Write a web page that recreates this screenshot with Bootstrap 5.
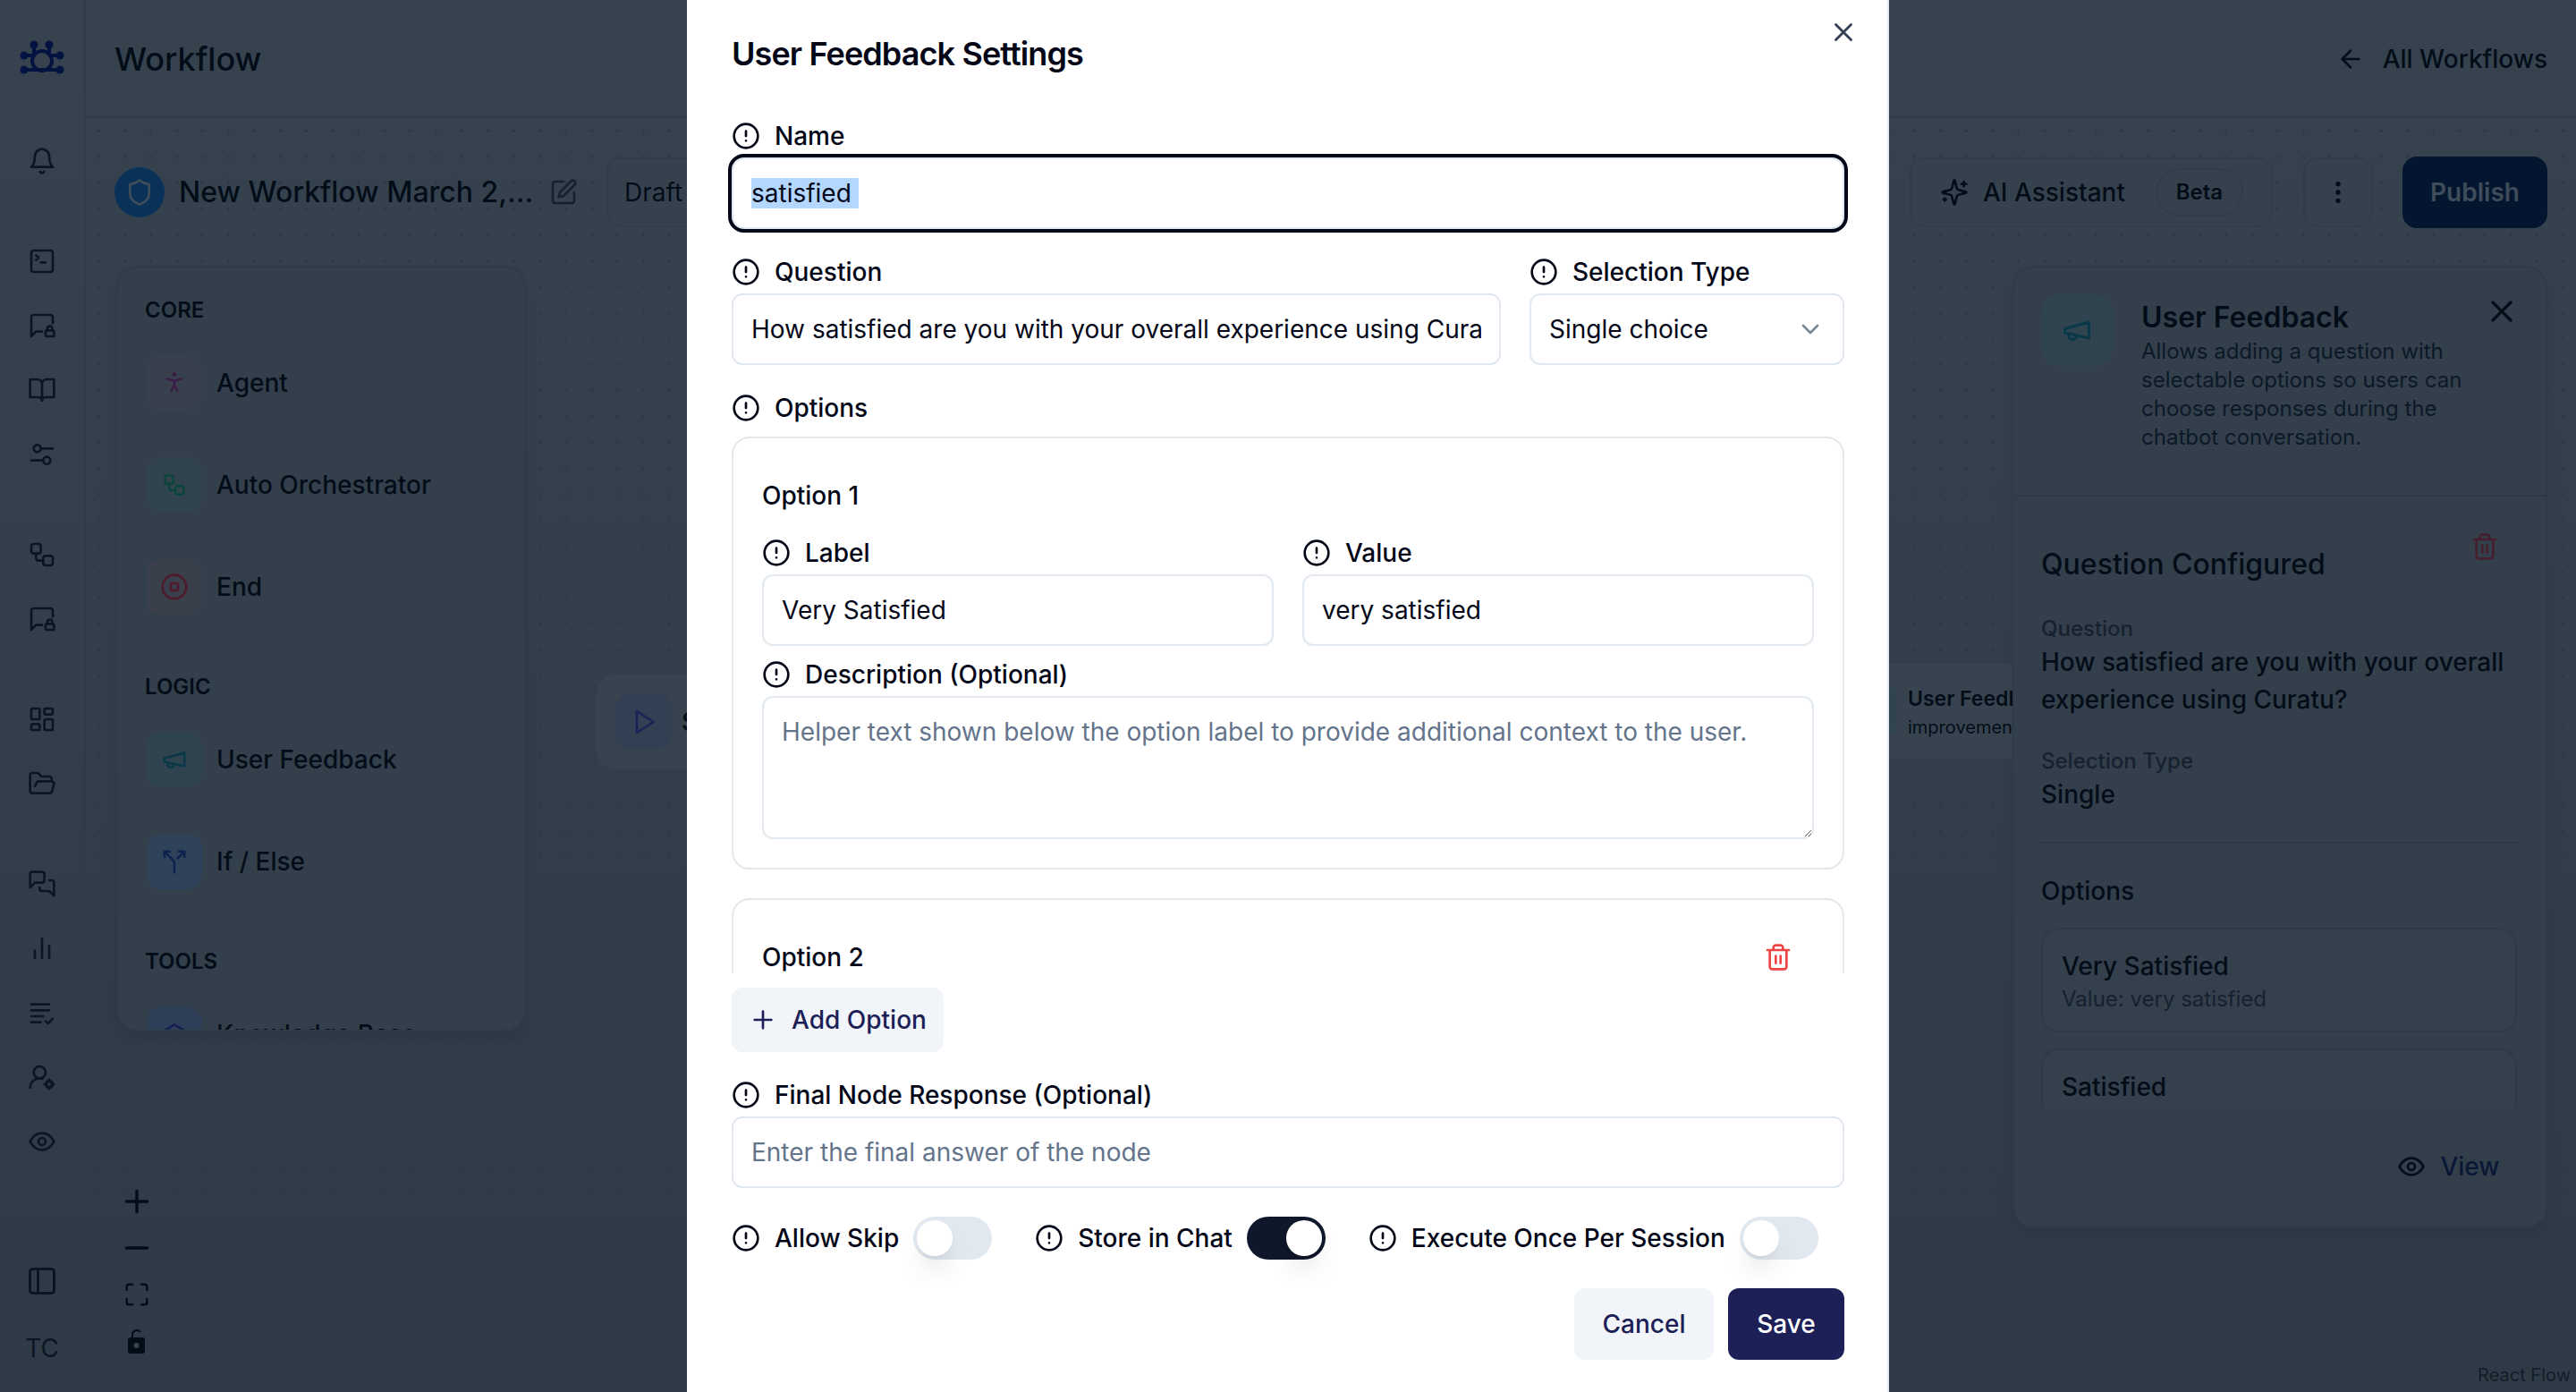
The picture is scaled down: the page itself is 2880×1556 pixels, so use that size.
<!DOCTYPE html>
<html lang="en">
<head>
<meta charset="utf-8">
<title>User Feedback Settings</title>
<link rel="stylesheet" href="https://cdn.jsdelivr.net/npm/bootstrap@5.3.0/dist/css/bootstrap.min.css">
<style>
:root{--ink:#030d18;--dim:#15222e;--line:#2f3c49;--brand:#1c2056;--fg:#020617;}
html,body{height:100%;margin:0;overflow:hidden}
body{font-family:Inter,"Liberation Sans",sans-serif;background:#323f4b;color:var(--ink)}
svg.ic{fill:none;stroke:currentColor;stroke-width:2;stroke-linecap:round;stroke-linejoin:round;flex:none;display:block}
.app{height:1556px;background:linear-gradient(#36434f,#2e3b47)}
.rail{width:96px;flex:none;border-right:2px solid #2f3c48;position:relative;color:#0a1622}
.rail-logo{height:144px;padding:30px 0 0 10px}
.rail-ic{height:72px;width:100%}
.rail-sp{height:40px}
.rail-sp-lg{height:84px}
.rail-tc{font-size:28px;line-height:44px;margin-top:17px;text-align:center;color:#0a1622;font-weight:400}
.stage{min-width:0;position:relative}
.top-bar{height:132px;border-bottom:2px solid #2f3c48;padding:2px 32px 0}
.top-name{font-size:36px;font-weight:500;line-height:56px}
.back-link{font-size:28px;font-weight:500;gap:20px}
.tool-bar{height:78px;margin-top:44px;padding:0 32px;position:relative}
.shield-dot{width:56px;height:56px;border-radius:50%;background:#0a3158;color:#3d4e5a}
.flow-name{font-size:32px;font-weight:500;margin-left:16px}
.edit-ic{color:var(--dim);margin-left:18px}
.soft-box{border:2px solid #303d4a;border-radius:16px;background:#35424e}
.draft{height:78px;width:200px;margin-left:32px;padding-left:18px;font-size:28px;line-height:74px;font-weight:400}
.ai-box{width:406px;height:78px;padding:0 32px}
.ai-text{font-size:28px;font-weight:500;margin-left:16px;white-space:nowrap}
.beta{width:98px;height:54px;border:2px solid #303d4a;border-radius:27px;text-align:center;line-height:50px;font-size:24px;font-weight:600;margin-left:34px;flex:none}
.dots-btn{width:78px;height:78px;margin-left:34px}
.pub{width:162px;height:80px;margin-left:33px;background:#04162f;border-radius:16px;color:#3f4d5a;font-size:28px;font-weight:600}
.work{position:absolute;left:0;right:0;top:132px;bottom:0;background-image:radial-gradient(#2d3a46 1.5px,transparent 1.6px);background-size:29px 29px}
.work-in{position:absolute;left:34px;right:32px;top:165px}
.pane{border:2px solid #2f3c48;border-radius:24px;background:#333f4b;box-shadow:0 8px 14px rgba(0,0,0,.1);overflow:hidden}
.palette{width:458px;height:856px;padding:32px 32px 32px 30px}
.group-h{font-size:24px;line-height:32px;font-weight:600;height:32px}
.p-item{height:62px;margin-top:52px;font-size:28px;font-weight:500}
.group-h + .p-item{margin-top:34px}
.p-item + .group-h{margin-top:65px}
.p-box{width:62px;height:62px;border-radius:16px;margin:0 16px 0 2px}
.c-agent{background:#383f4d;color:#3a1c46}.c-auto{background:#31444d;color:#0a443c}.c-end{background:#3a404b;color:#4e1a2c}
.c-fb{background:#30444f;color:#093848}.c-if{background:#2f425a;color:#0b234d}.c-kb{background:#2f3e57;color:#141f55}
.detail{width:598px;height:1076px}
.d-head{height:256px;border-bottom:2px solid #2d3a46;padding:30px 32px 30px 30px;position:relative}
.d-box{width:80px;height:80px;border-radius:20px;margin-right:32px;background:#30444f;color:#093848;flex:none}
.d-title{font-size:32px;line-height:48px;font-weight:600;margin:2px 0 -2px}
.d-desc{font-size:24px;line-height:32px;color:#0b1927}
.d-x{position:absolute;top:29px;left:525px}
.d-scroll{height:682px;overflow:hidden;padding:40px 32px 0 30px}
.d-conf{font-size:32px;font-weight:500;line-height:48px;margin-top:12px}
.d-trash{color:#451f2e;margin-right:20px}
.d-lab{font-size:24px;line-height:32px;color:var(--dim);font-weight:500;margin-top:32px}
.d-val{font-size:28px;line-height:42px;font-weight:500}
.d-rule{border-top:2px solid #2d3a46;margin:32px 0}
.d-opt{font-size:28px;line-height:42px;font-weight:500;margin-bottom:20px}
.d-card{border:2px solid #2e3b47;border-radius:20px;padding:21px;height:117px;margin-bottom:18px;background:#34404c}
.d-card b{display:block;font-weight:500;font-size:28px;line-height:40px}
.d-card small{display:block;font-size:24px;line-height:34px;color:var(--dim)}
.d-foot{padding:32px 32px 0}
.view-btn{width:153px;height:69px;border-radius:16px;background:#323f4b;font-size:28px;font-weight:500;color:#091735}
.view-btn svg{color:var(--ink)}
.flow-node{position:absolute;border:2px solid #33404c;background:#37444f;border-radius:24px}
.node-a{left:569px;top:620px;width:300px;height:110px;font-size:28px;font-weight:600;line-height:106px;padding-left:95px}
.node-a i{position:absolute;left:21px;top:21px;width:63px;height:63px;border-radius:16px;background:#333f52;color:#1a2258;display:flex;align-items:center;justify-content:center}
.node-b{left:1980px;top:608px;width:174px;height:110px;padding:23px 0 0 55px;overflow:hidden;white-space:nowrap;font-size:20px;line-height:32px;border-radius:24px 0 0 24px;border-right:0}
.node-b b{display:block;font-weight:600;font-size:23px}
.node-b i{position:absolute;left:10px;top:25px;width:32px;height:56px;border-radius:12px;background:#30444f}
.zoom-set{position:absolute;left:31px;top:1184px;width:52px;border:2px solid #2f3c48}
.zoom-set div{height:52px;border-bottom:2px solid #2f3c48;display:flex;align-items:center;justify-content:center}
.zoom-set div:last-child{border:0}
.flow-mark{position:absolute;right:6px;bottom:2px;font-size:20px;line-height:34px;color:#121d27;padding:0 0 0 12px}
/* modal */
.dlg{position:fixed;left:768px;top:0;width:1344px;height:1556px;background:#fff;border-right:2px solid #e2e8f0;padding:32px 46px 0 48px;color:var(--fg);overflow:hidden;z-index:10}
.dlg-inner{padding:0 2px}
.dlg-title{font-size:36px;line-height:56px;font-weight:600;letter-spacing:-.9px;margin:0 0 48px}
.dlg-x{position:absolute;left:1276px;top:19px;color:#334155;border:0;background:none;padding:0}
.f-lab{display:flex;align-items:center;gap:16px;font-size:28px;line-height:32px;font-weight:500;margin:0 0 8px;color:var(--fg);white-space:nowrap}
.f-lab svg{width:32px;height:32px}
.form-control.fld{height:80px;border:2px solid #e2e8f0;border-radius:12px;font-size:28px;padding:0 20px;color:var(--fg);box-shadow:none;font-weight:400}
.form-control.fld::placeholder{color:#64748b;opacity:1}
.form-control.fld.ring{outline:4px solid #020617;outline-offset:0;border-radius:14px}
.fld::selection{background:#b3d7ff;color:#020617}
textarea.form-control.fld{height:160px;padding:18px 20px;line-height:40px}
.sel-wrap{position:relative}
.sel-wrap svg{position:absolute;right:22px;top:24px;width:32px;height:32px;color:#7a8798}
.q-row{gap:32px;margin-top:32px}
.q-main{width:860px}
.q-side{width:352px}
.half-row{gap:32px}
.half{width:50%}
.gap-f{margin-top:32px}
.gap-s{margin-top:16px}
.scroll-zone{height:600px;overflow:hidden;margin-top:16px}
.opt-card{border:2px solid #e5e7eb;border-radius:20px;padding:32px;margin-bottom:32px}
.opt-h{height:64px;margin-bottom:16px;font-size:28px;font-weight:500;color:var(--fg)}
.opt-trash{color:#ef4444;margin-right:24px}
.add-btn{height:72px;width:237px;margin-top:16px;border-radius:12px;background:#f1f5f9;color:var(--brand);font-size:28px;font-weight:500;border:0;padding:0;gap:16px}
.sw{width:88px;height:48px;border-radius:24px;background:#e2e8f0;position:relative;flex:none;margin-left:16px}
.sw::after{content:"";position:absolute;left:4px;top:4px;width:40px;height:40px;border-radius:50%;background:#fff;box-shadow:0 20px 30px -6px rgba(0,0,0,.12),0 8px 12px -8px rgba(0,0,0,.1)}
.sw.on{background:#0f172a}
.sw.on::after{left:44px}
.sw-row{height:48px;margin-top:32px}
.sw-item{margin-right:48px;flex:none}
.sw-item .f-lab{margin:0}
.foot-row{margin-top:32px}
.dlg-btn{height:80px;border-radius:12px;font-size:28px;font-weight:500;border:0;padding:0}
.b-cancel{width:156px;background:#f1f5f9;color:var(--brand)}
.b-save{width:130px;background:var(--brand);color:#fff;margin-left:16px}
</style>
</head>
<body>
<svg width="0" height="0" class="position-absolute">
<defs>
<symbol id="i-info" viewBox="0 0 24 24"><circle cx="12" cy="12" r="10"/><path d="M12 8v4M12 16h.01"/></symbol>
<symbol id="i-x" viewBox="0 0 24 24"><path d="M18 6 6 18M6 6l12 12"/></symbol>
<symbol id="i-chev" viewBox="0 0 24 24"><path d="m6 9 6 6 6-6"/></symbol>
<symbol id="i-trash" viewBox="0 0 24 24"><path d="M3 6h18M19 6v14c0 1-1 2-2 2H7c-1 0-2-1-2-2V6M8 6V4c0-1 1-2 2-2h4c1 0 2 1 2 2v2M10 11v6M14 11v6"/></symbol>
<symbol id="i-plus" viewBox="0 0 24 24"><path d="M5 12h14M12 5v14"/></symbol>
<symbol id="i-minus" viewBox="0 0 24 24"><path d="M5 12h14"/></symbol>
<symbol id="i-bell" viewBox="0 0 24 24"><path d="M6 8a6 6 0 0 1 12 0c0 7 3 9 3 9H3s3-2 3-9M10.3 21a1.94 1.94 0 0 0 3.4 0"/></symbol>
<symbol id="i-term" viewBox="0 0 24 24"><rect x="3" y="3" width="18" height="18" rx="2"/><path d="m7 11 2-2-2-2M11 13h4"/></symbol>
<symbol id="i-msglock" viewBox="0 0 24 24"><path d="M21 10V5a2 2 0 0 0-2-2H5a2 2 0 0 0-2 2v16l4-4h5"/><rect x="15" y="16" width="7" height="5" rx="1"/><path d="M16.5 16v-1.5a2 2 0 0 1 4 0V16"/></symbol>
<symbol id="i-book" viewBox="0 0 24 24"><path d="M2 3h6a4 4 0 0 1 4 4v14a3 3 0 0 0-3-3H2zM22 3h-6a4 4 0 0 0-4 4v14a3 3 0 0 1 3-3h7z"/></symbol>
<symbol id="i-slide" viewBox="0 0 24 24"><circle cx="8" cy="7" r="3"/><path d="M11 7h10M3 17h10"/><circle cx="16" cy="17" r="3"/></symbol>
<symbol id="i-flow" viewBox="0 0 24 24"><rect x="3" y="3" width="8" height="8" rx="2"/><path d="M7 11v4a2 2 0 0 0 2 2h4"/><rect x="13" y="13" width="8" height="8" rx="2"/></symbol>
<symbol id="i-dash" viewBox="0 0 24 24"><rect x="3" y="3" width="7" height="9" rx="1"/><rect x="14" y="3" width="7" height="5" rx="1"/><rect x="14" y="12" width="7" height="9" rx="1"/><rect x="3" y="16" width="7" height="5" rx="1"/></symbol>
<symbol id="i-folder" viewBox="0 0 24 24"><path d="m6 14 1.5-2.9A2 2 0 0 1 9.24 10H20a2 2 0 0 1 1.94 2.5l-1.54 6a2 2 0 0 1-1.95 1.5H4a2 2 0 0 1-2-2V5a2 2 0 0 1 2-2h3.9a2 2 0 0 1 1.69.9l.81 1.2a2 2 0 0 0 1.67.9H18a2 2 0 0 1 2 2v2"/></symbol>
<symbol id="i-chat" viewBox="0 0 24 24"><path d="M14 9a2 2 0 0 1-2 2H6l-4 4V4c0-1.1.9-2 2-2h8a2 2 0 0 1 2 2zM18 9h2a2 2 0 0 1 2 2v11l-4-4h-6a2 2 0 0 1-2-2v-1"/></symbol>
<symbol id="i-bars" viewBox="0 0 24 24"><path d="M18 20V10M12 20V4M6 20v-6"/></symbol>
<symbol id="i-list" viewBox="0 0 24 24"><path d="M3 5h15M3 10h15M3 15h10M3 20h8M15 19l2 2 4-4"/></symbol>
<symbol id="i-usercog" viewBox="0 0 24 24"><circle cx="10" cy="8" r="5"/><path d="M2 21a8 8 0 0 1 10.4-7.6"/><circle cx="18" cy="18" r="2.6" stroke-width="2.6"/><path d="M18 14v1M18 21v1M14 18h1M21 18h1"/></symbol>
<symbol id="i-eye" viewBox="0 0 24 24"><path d="M2 12s3-7 10-7 10 7 10 7-3 7-10 7-10-7-10-7Z"/><circle cx="12" cy="12" r="3"/></symbol>
<symbol id="i-panel" viewBox="0 0 24 24"><rect x="3" y="3" width="18" height="18" rx="2"/><path d="M9 3v18"/></symbol>
<symbol id="i-edit" viewBox="0 0 24 24"><path d="M12 3H5a2 2 0 0 0-2 2v14a2 2 0 0 0 2 2h14a2 2 0 0 0 2-2v-7"/><path d="M18.375 2.625a2.121 2.121 0 1 1 3 3L12 15l-4 1 1-4Z"/></symbol>
<symbol id="i-shield" viewBox="0 0 24 24"><path d="M20 13c0 5-3.5 7.500-7.660 8.950a1 1 0 0 1-.67-.01C7.500 20.500 4 18 4 13V6a1 1 0 0 1 1-1c2 0 4.500-1.200 6.240-2.720a1.170 1.170 0 0 1 1.520 0C14.510 3.810 17 5 19 5a1 1 0 0 1 1 1z"/></symbol>
<symbol id="i-person" viewBox="0 0 24 24"><circle cx="12" cy="4" r="1"/><path d="m9 20 3-6 3 6M5 8l7 2 7-2M12 10v4"/></symbol>
<symbol id="i-stop" viewBox="0 0 24 24"><circle cx="12" cy="12" r="10"/><rect x="9" y="9" width="6" height="6" rx="1"/></symbol>
<symbol id="i-mega" viewBox="0 0 24 24"><path d="m3 11 18-5v12L3 14v-3zM11.600 16.800a3 3 0 1 1-5.800-1.600"/></symbol>
<symbol id="i-split" viewBox="0 0 24 24"><path d="M16 3h5v5M8 3H3v5M12 22v-8.300a4 4 0 0 0-1.172-2.872L3 3M15 9l6-6"/></symbol>
<symbol id="i-kb" viewBox="0 0 24 24"><path d="m2 10 10-6 10 6-10 6zM6 13v5c3 2 9 2 12 0v-5"/></symbol>
<symbol id="i-fit" viewBox="0 0 24 24"><path d="M8 3H5a2 2 0 0 0-2 2v3M21 8V5a2 2 0 0 0-2-2h-3M3 16v3a2 2 0 0 0 2 2h3M16 21h3a2 2 0 0 0 2-2v-3"/></symbol>
<symbol id="i-spark" viewBox="0 0 24 24"><path d="M9.937 15.500A2 2 0 0 0 8.500 14.063l-6.135-1.582a.5.5 0 0 1 0-.962L8.500 9.936A2 2 0 0 0 9.937 8.500l1.582-6.135a.5.5 0 0 1 .963 0L14.063 8.500A2 2 0 0 0 15.500 9.937l6.135 1.581a.5.5 0 0 1 0 .964L15.500 14.063a2 2 0 0 0-1.437 1.437l-1.582 6.135a.5.5 0 0 1-.963 0zM20 3v4M22 5h-4M4 17v2M5 18H3"/></symbol>
<symbol id="i-back" viewBox="0 0 24 24"><path d="m12 19-7-7 7-7M19 12H5"/></symbol>
<symbol id="i-play" viewBox="0 0 24 24"><path d="m6 3 14 9-14 9z"/></symbol>
<symbol id="i-dots" viewBox="0 0 24 24"><circle cx="12" cy="5" r="1"/><circle cx="12" cy="12" r="1"/><circle cx="12" cy="19" r="1"/></symbol>
</defs>
</svg>

<div class="app d-flex">
  <aside class="rail">
    <div class="rail-logo">
      <svg width="66" height="60" viewBox="10 30 66 60" fill="none" stroke="#031240" stroke-width="4">
        <circle cx="47" cy="68" r="11"/><path d="M38 50v10M55 50v10M27 62h10M57 62h10M27 78h40"/>
        <g fill="#031240" stroke="none"><circle cx="38" cy="50" r="4.500"/><circle cx="55" cy="50" r="4.500"/><circle cx="27" cy="62" r="4.500"/><circle cx="67" cy="62" r="4.500"/><circle cx="27" cy="78" r="4.500"/><circle cx="67" cy="78" r="4.500"/></g>
      </svg>
    </div>
    <div class="rail-ic d-flex align-items-center justify-content-center"><svg class="ic" width="32" height="32"><use href="#i-bell"/></svg></div>
    <div class="rail-sp"></div>
    <div class="rail-ic d-flex align-items-center justify-content-center"><svg class="ic" width="32" height="32"><use href="#i-term"/></svg></div>
    <div class="rail-ic d-flex align-items-center justify-content-center"><svg class="ic" width="32" height="32"><use href="#i-msglock"/></svg></div>
    <div class="rail-ic d-flex align-items-center justify-content-center"><svg class="ic" width="32" height="32"><use href="#i-book"/></svg></div>
    <div class="rail-ic d-flex align-items-center justify-content-center"><svg class="ic" width="32" height="32"><use href="#i-slide"/></svg></div>
    <div class="rail-sp"></div>
    <div class="rail-ic d-flex align-items-center justify-content-center"><svg class="ic" width="32" height="32"><use href="#i-flow"/></svg></div>
    <div class="rail-ic d-flex align-items-center justify-content-center"><svg class="ic" width="32" height="32"><use href="#i-msglock"/></svg></div>
    <div class="rail-sp"></div>
    <div class="rail-ic d-flex align-items-center justify-content-center"><svg class="ic" width="32" height="32"><use href="#i-dash"/></svg></div>
    <div class="rail-ic d-flex align-items-center justify-content-center"><svg class="ic" width="32" height="32"><use href="#i-folder"/></svg></div>
    <div class="rail-sp"></div>
    <div class="rail-ic d-flex align-items-center justify-content-center"><svg class="ic" width="32" height="32"><use href="#i-chat"/></svg></div>
    <div class="rail-ic d-flex align-items-center justify-content-center"><svg class="ic" width="32" height="32"><use href="#i-bars"/></svg></div>
    <div class="rail-ic d-flex align-items-center justify-content-center"><svg class="ic" width="32" height="32"><use href="#i-list"/></svg></div>
    <div class="rail-ic d-flex align-items-center justify-content-center"><svg class="ic" width="32" height="32"><use href="#i-usercog"/></svg></div>
    <div class="rail-ic d-flex align-items-center justify-content-center"><svg class="ic" width="32" height="32"><use href="#i-eye"/></svg></div>
    <div class="rail-sp-lg"></div>
    <div class="rail-ic d-flex align-items-center justify-content-center"><svg class="ic" width="36" height="36"><use href="#i-panel"/></svg></div>
    <div class="rail-tc">TC</div>
  </aside>
  <main class="stage flex-grow-1">
    <header class="top-bar d-flex align-items-center justify-content-between">
      <div class="top-name">Workflow</div>
      <div class="back-link d-flex align-items-center"><svg class="ic" width="32" height="32"><use href="#i-back"/></svg><span>All Workflows</span></div>
    </header>
    <div class="work">
      <div class="flow-node node-a"><i><svg class="ic" width="32" height="32"><use href="#i-play"/></svg></i>Start</div>
      <div class="flow-node node-b"><i></i><b>User Feedback</b><span>improvements</span></div>
      <div class="zoom-set">
        <div><svg class="ic" width="40" height="40"><use href="#i-plus"/></svg></div>
        <div><svg class="ic" width="40" height="40"><use href="#i-minus"/></svg></div>
        <div><svg class="ic" width="30" height="30"><use href="#i-fit"/></svg></div>
        <div><svg width="22" height="28" viewBox="0 0 22 28" fill="#030d18"><rect x="1" y="9" width="19" height="18" rx="3"/><path d="M6 9V6a5 5 0 0 1 9-3" fill="none" stroke="#030d18" stroke-width="2"/><circle cx="10.500" cy="18" r="3" fill="#36434f"/></svg></div>
      </div>
      <div class="work-in d-flex justify-content-between align-items-start">
        <section class="pane palette">
          <div class="group-h">CORE</div>
          <div class="p-item d-flex align-items-center"><span class="p-box c-agent d-flex align-items-center justify-content-center"><svg class="ic" width="28" height="28"><use href="#i-person"/></svg></span>Agent</div>
          <div class="p-item d-flex align-items-center"><span class="p-box c-auto d-flex align-items-center justify-content-center"><svg class="ic" width="28" height="28"><use href="#i-flow"/></svg></span>Auto Orchestrator</div>
          <div class="p-item d-flex align-items-center"><span class="p-box c-end d-flex align-items-center justify-content-center"><svg class="ic" width="32" height="32"><use href="#i-stop"/></svg></span>End</div>
          <div class="group-h">LOGIC</div>
          <div class="p-item d-flex align-items-center"><span class="p-box c-fb d-flex align-items-center justify-content-center"><svg class="ic" width="30" height="30"><use href="#i-mega"/></svg></span>User Feedback</div>
          <div class="p-item d-flex align-items-center"><span class="p-box c-if d-flex align-items-center justify-content-center"><svg class="ic" width="30" height="30"><use href="#i-split"/></svg></span>If / Else</div>
          <div class="group-h">TOOLS</div>
          <div class="p-item d-flex align-items-center"><span class="p-box c-kb d-flex align-items-center justify-content-center"><svg class="ic" width="32" height="32"><use href="#i-kb"/></svg></span>Knowledge Base</div>
        </section>
        <section class="pane detail">
          <div class="d-head d-flex">
            <span class="d-box d-flex align-items-center justify-content-center"><svg class="ic" width="36" height="36"><use href="#i-mega"/></svg></span>
            <div><div class="d-title">User Feedback</div><div class="d-desc">Allows adding a question with selectable options so users can choose responses during the chatbot conversation.</div></div>
            <svg class="ic d-x" width="40" height="40"><use href="#i-x"/></svg>
          </div>
          <div class="d-scroll">
            <div class="d-flex justify-content-between align-items-start">
              <div class="d-conf">Question Configured</div>
              <svg class="ic d-trash" width="32" height="32"><use href="#i-trash"/></svg>
            </div>
            <div class="d-lab">Question</div>
            <div class="d-val">How satisfied are you with your overall experience using Curatu?</div>
            <div class="d-lab">Selection Type</div>
            <div class="d-val">Single</div>
            <div class="d-rule"></div>
            <div class="d-opt">Options</div>
            <div class="d-card"><b>Very Satisfied</b><small>Value: very satisfied</small></div>
            <div class="d-card"><b>Satisfied</b></div>
          </div>
          <div class="d-foot d-flex justify-content-end">
            <div class="view-btn d-flex align-items-center justify-content-center gap-3"><svg class="ic" width="32" height="32"><use href="#i-eye"/></svg>View</div>
          </div>
        </section>
      </div>
      <div class="flow-mark">React Flow</div>
    </div>
    <div class="tool-bar d-flex align-items-center justify-content-between">
      <div class="d-flex align-items-center">
        <span class="shield-dot d-flex align-items-center justify-content-center"><svg class="ic" width="32" height="32"><use href="#i-shield"/></svg></span>
        <span class="flow-name">New Workflow March 2,...</span>
        <svg class="ic edit-ic" width="32" height="32"><use href="#i-edit"/></svg>
        <span class="soft-box draft">Draft</span>
      </div>
      <div class="d-flex align-items-center">
        <div class="soft-box ai-box d-flex align-items-center"><svg class="ic" width="32" height="32"><use href="#i-spark"/></svg><span class="ai-text">AI Assistant</span><span class="beta">Beta</span></div>
        <div class="soft-box dots-btn d-flex align-items-center justify-content-center"><svg class="ic" width="32" height="32"><use href="#i-dots"/></svg></div>
        <div class="pub d-flex align-items-center justify-content-center">Publish</div>
      </div>
    </div>
  </main>
</div>

<div class="dlg" role="dialog" aria-modal="true">
  <button class="dlg-x" type="button" aria-label="Close"><svg class="ic" width="34" height="34"><use href="#i-x"/></svg></button>
  <div class="dlg-inner">
    <h2 class="dlg-title">User Feedback Settings</h2>
    <label class="f-lab"><svg class="ic"><use href="#i-info"/></svg>Name</label>
    <input id="nameField" class="form-control fld ring" value="satisfied " autofocus>
    <div class="d-flex q-row">
      <div class="q-main">
        <label class="f-lab"><svg class="ic"><use href="#i-info"/></svg>Question</label>
        <input class="form-control fld" value="How satisfied are you with your overall experience using Curatu?">
      </div>
      <div class="q-side">
        <label class="f-lab"><svg class="ic"><use href="#i-info"/></svg>Selection Type</label>
        <div class="sel-wrap"><input class="form-control fld" value="Single choice"><svg class="ic"><use href="#i-chev"/></svg></div>
      </div>
    </div>
    <label class="f-lab gap-f"><svg class="ic"><use href="#i-info"/></svg>Options</label>
    <div class="scroll-zone">
      <div class="opt-card">
        <div class="opt-h d-flex align-items-center">Option 1</div>
        <div class="d-flex half-row">
          <div class="half"><label class="f-lab"><svg class="ic"><use href="#i-info"/></svg>Label</label><input class="form-control fld" value="Very Satisfied"></div>
          <div class="half"><label class="f-lab"><svg class="ic"><use href="#i-info"/></svg>Value</label><input class="form-control fld" value="very satisfied"></div>
        </div>
        <label class="f-lab gap-s"><svg class="ic"><use href="#i-info"/></svg>Description (Optional)</label>
        <textarea class="form-control fld" placeholder="Helper text shown below the option label to provide additional context to the user."></textarea>
      </div>
      <div class="opt-card">
        <div class="opt-h d-flex align-items-center justify-content-between">Option 2<svg class="ic opt-trash" width="32" height="32"><use href="#i-trash"/></svg></div>
      </div>
    </div>
    <button class="btn add-btn d-flex align-items-center justify-content-center" type="button"><svg class="ic" width="32" height="32"><use href="#i-plus"/></svg>Add Option</button>
    <label class="f-lab gap-f"><svg class="ic"><use href="#i-info"/></svg>Final Node Response (Optional)</label>
    <input class="form-control fld" placeholder="Enter the final answer of the node">
    <div class="sw-row d-flex align-items-center">
      <div class="sw-item d-flex align-items-center"><label class="f-lab"><svg class="ic"><use href="#i-info"/></svg>Allow Skip</label><span class="sw"></span></div>
      <div class="sw-item d-flex align-items-center"><label class="f-lab"><svg class="ic"><use href="#i-info"/></svg>Store in Chat</label><span class="sw on"></span></div>
      <div class="sw-item d-flex align-items-center"><label class="f-lab"><svg class="ic"><use href="#i-info"/></svg>Execute Once Per Session</label><span class="sw"></span></div>
    </div>
    <div class="d-flex justify-content-end foot-row">
      <button class="btn dlg-btn b-cancel" type="button">Cancel</button>
      <button class="btn dlg-btn b-save" type="button">Save</button>
    </div>
  </div>
</div>
<script src="https://cdn.jsdelivr.net/npm/bootstrap@5.3.0/dist/js/bootstrap.bundle.min.js"></script>
<script>document.getElementById('nameField').select();</script>
</body>
</html>
